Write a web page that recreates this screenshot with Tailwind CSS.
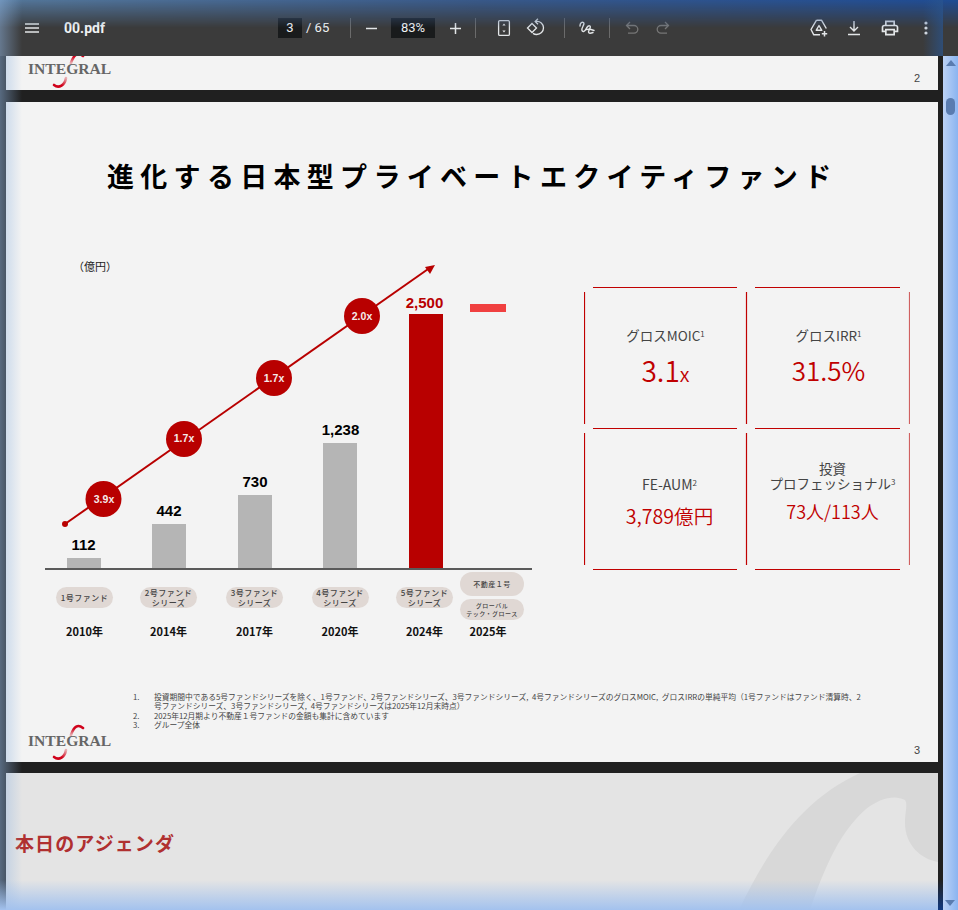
<!DOCTYPE html>
<html lang="ja">

<head>
  <meta charset="UTF-8">
  <title>00.pdf</title>
  <script src="https://cdn.jsdelivr.net/npm/@tailwindcss/browser@4"></script>
</head>

<body class="bg-[#202020]">
  <div class="relative w-[958px] h-[910px] overflow-hidden flex flex-col font-['Noto_Sans_CJK_JP',sans-serif]">

    <!-- Toolbar -->
    <header class="relative h-[56px] shrink-0 bg-[#3b3b3b] flex items-center text-[#f1f3f4] font-['Roboto',sans-serif]">
      <svg class="ml-[25px] w-[14px] h-[10px]" viewBox="0 0 14 10" fill="none" stroke="#e3e6e8" stroke-width="1.3">
        <path d="M0 1h14M0 5h14M0 9h14" />
      </svg>
      <span class="ml-[25px] w-[214px] text-[14px] font-bold">00.pdf</span>
      <span class="w-[24px] h-[20px] bg-[#191b1c] flex items-center justify-center text-[13px]">3</span>
      <span class="ml-[4px] w-[44px] text-[13px]">/ 65</span>
      <span class="w-px h-[20px] bg-[#6b6b6b]"></span>
      <svg class="ml-[15px] w-[11px] h-[11px]" viewBox="0 0 11 11" stroke="#e3e6e8" stroke-width="1.5">
        <path d="M0 5.5h11" />
      </svg>
      <span class="ml-[14px] w-[44px] h-[20px] bg-[#191b1c] flex items-center justify-center text-[13px]">83%</span>
      <svg class="ml-[15px] w-[11px] h-[11px]" viewBox="0 0 11 11" stroke="#e3e6e8" stroke-width="1.5">
        <path d="M0 5.5h11M5.5 0v11" />
      </svg>
      <span class="ml-[14px] w-px h-[20px] bg-[#6b6b6b]"></span>
      <!-- fit to page -->
      <svg class="ml-[18px] w-[20px] h-[20px]" viewBox="0 0 20 20" fill="none" stroke="#e3e6e8" stroke-width="1.3">
        <rect x="4.6" y="2.6" width="10.8" height="14.8" rx="1.2" />
        <path d="M10 5.5l1.6 2h-3.2zM10 14.5l1.6-2h-3.2z" fill="#e3e6e8" stroke="none" />
      </svg>
      <!-- rotate -->
      <svg class="ml-[11px] w-[22px] h-[22px]" viewBox="0 0 22 22" fill="none" stroke="#e3e6e8" stroke-width="1.3">
        <path d="M7 6.5l4.500 4.500-4.500 4.500L2.500 11z" />
        <path d="M11 4.500c4.200-.6 7.500 2.400 7.500 6.300 0 3.800-3 6.700-6.800 6.700-1.500 0-2.700-.4-3.700-1.100" />
        <path d="M13 1.800L10.200 4.500 13 7.200" />
      </svg>
      <span class="ml-[17px] w-px h-[20px] bg-[#6b6b6b]"></span>
      <!-- draw -->
      <svg class="ml-[12px] w-[20px] h-[20px]" viewBox="0 0 20 20" fill="none" stroke="#e3e6e8" stroke-width="1.4" stroke-linecap="round">
        <path d="M3 8c0-3 2-4.500 3.500-3.500 2 1.500-2.500 5-1.500 8 .7 2 3 .8 4-1.500 1-2 2.500-4 4-3 1.500 1.200-1.500 4-1.500 6 0 1.500 2 1.500 4.500.5" />
        <path d="M9.500 11.500c2-.5 5 0 7.500 1" />
      </svg>
      <span class="ml-[12px] w-px h-[20px] bg-[#6b6b6b]"></span>
      <!-- undo / redo -->
      <svg class="ml-[15px] w-[14px] h-[14px]" viewBox="0 0 14 14" fill="none" stroke="#777" stroke-width="1.3">
        <path d="M5 1L1.500 4.500 5 8M1.500 4.500H9a3.800 3.800 0 0 1 0 7.600H3" />
      </svg>
      <svg class="ml-[17px] w-[14px] h-[14px]" viewBox="0 0 14 14" fill="none" stroke="#777" stroke-width="1.3">
        <path d="M9 1l3.500 3.500L9 8M12.500 4.500H5a3.800 3.800 0 0 0 0 7.600h6" />
      </svg>
      <!-- add to drive -->
      <svg class="ml-[139px] w-[20px] h-[20px]" viewBox="0 0 20 20" fill="none" stroke="#e3e6e8" stroke-width="1.4" stroke-linejoin="round">
        <path d="M7.500 2.200h5l4.800 8.300M7.500 2.200L2 11.500l2.800 5.300H11" />
        <path d="M10 7.500l2.800 4.800H7.200z" />
        <path d="M15.500 13v5.500M12.800 15.800h5.400" stroke-width="1.500" />
      </svg>
      <!-- download -->
      <svg class="ml-[18px] w-[14px] h-[16px]" viewBox="0 0 14 16" fill="none" stroke="#e3e6e8" stroke-width="1.4">
        <path d="M7 1v9.500M3 7l4 4 4-4M1 14.500h12" />
      </svg>
      <!-- print -->
      <svg class="ml-[19px] w-[20px] h-[20px]" viewBox="0 0 24 24" fill="#e3e6e8">
        <path d="M19 8h-1V3H6v5H5c-1.660 0-3 1.340-3 3v6h4v4h12v-4h4v-6c0-1.660-1.340-3-3-3zM8 5h8v3H8V5zm8 12v2H8v-4h8v2zm2-2v-2H6v2H4v-4c0-.55.45-1 1-1h14c.55 0 1 .45 1 1v4h-2z" />
      </svg>
      <!-- more -->
      <svg class="ml-[24px] w-[4px] h-[14px]" viewBox="0 0 4 14" fill="#e3e6e8">
        <circle cx="2" cy="2" r="1.600" />
        <circle cx="2" cy="7" r="1.600" />
        <circle cx="2" cy="12" r="1.600" />
      </svg>
    </header>

    <div class="flex flex-1 min-h-0">
      <main class="w-[943px] pl-[6px] pr-[5px] flex flex-col">

        <!-- Page 2, bottom edge -->
        <section class="relative h-[34px] shrink-0 bg-[#f3f3f3] overflow-hidden">
          <div class="absolute left-[22px] top-[-4px] w-[86px] h-[38px]">
            <svg class="absolute inset-0" viewBox="0 0 86 38" fill="none" stroke-width="2.600" stroke-linecap="round">
              <defs>
                <linearGradient id="hookA" x1="0" y1="0" x2="0" y2="1">
                  <stop offset="0.3" stop-color="#d0021b" />
                  <stop offset="1" stop-color="#e8b0b4" />
                </linearGradient>
                <linearGradient id="tailA" x1="1" y1="0" x2="0" y2="1">
                  <stop offset="0" stop-color="#e8b0b4" />
                  <stop offset="0.6" stop-color="#d0021b" />
                </linearGradient>
              </defs>
              <path d="M55 4C50 0 46 2 43 11" stroke="url(#hookA)" />
              <path d="M38 26C37 33 31 37 26 33" stroke="url(#tailA)" />
            </svg>
            <span class="absolute left-0 top-[7px] font-['Liberation_Serif',serif] font-bold text-[15.600px] leading-[20px] text-[#666]">INTEGRAL</span>
          </div>
          <span class="absolute left-[908px] top-[14px] text-[11px] leading-[16px] text-[#444] font-['Liberation_Sans',sans-serif]">2</span>
        </section>

        <!-- Page 3 -->
        <section class="relative h-[660px] shrink-0 mt-[12px] bg-[#f3f3f3] overflow-hidden">
          <h1 class="pt-[54px] pl-[101px] h-[94px] text-[27px] leading-[40px] font-bold tracking-[6.300px] text-black whitespace-nowrap">進化する日本型プライベートエクイティファンド</h1>

          <div class="flex mt-[56px] pb-0">
            <!-- Chart -->
            <div class="relative w-[578px] pl-[35px] h-[393px] flex items-start text-center">
              <span class="absolute left-[67px] top-[6px] text-[11px] leading-[16px] text-[#222]">（億円）</span>

              <div class="absolute left-[39px] top-[316px] w-[487px] h-[2px] bg-[#5a5a5a]"></div>

              <!-- growth arrow -->
              <svg class="absolute left-0 top-0 z-10" width="530" height="317" viewBox="0 0 530 317" fill="none">
                <path d="M59 272L425 15" stroke="#b80000" stroke-width="2" />
                <path d="M429 13L419 15L424 22Z" fill="#b80000" />
                <circle cx="59" cy="272" r="3" fill="#b80000" />
                <circle cx="97.500" cy="247" r="18" fill="#b80000" />
                <circle cx="178" cy="187" r="18" fill="#b80000" />
                <circle cx="268" cy="126" r="18" fill="#b80000" />
                <circle cx="356" cy="64" r="18" fill="#b80000" />
              </svg>
              <div class="absolute left-[80px] top-[238px] w-[36px] z-20 text-[10.500px] leading-[18px] font-bold text-[#f5eaea] font-['Liberation_Sans',sans-serif]">3.9x</div>
              <div class="absolute left-[160px] top-[177px] w-[36px] z-20 text-[10.500px] leading-[18px] font-bold text-[#f5eaea] font-['Liberation_Sans',sans-serif]">1.7x</div>
              <div class="absolute left-[250px] top-[117px] w-[36px] z-20 text-[10.500px] leading-[18px] font-bold text-[#f5eaea] font-['Liberation_Sans',sans-serif]">1.7x</div>
              <div class="absolute left-[338px] top-[55px] w-[36px] z-20 text-[10.500px] leading-[18px] font-bold text-[#f5eaea] font-['Liberation_Sans',sans-serif]">2.0x</div>

              <div class="w-[85px] flex flex-col items-center">
                <div class="h-[317px] flex flex-col justify-end items-center">
                  <span class="mb-[4px] text-[15px] leading-[18px] font-bold text-black font-['Liberation_Sans',sans-serif]">112</span>
                  <div class="w-[34px] h-[11px] bg-[#b5b5b5]"></div>
                </div>
                <div class="mt-[18px] ml-[2px] h-[21px] w-[57px] rounded-full bg-[#e0d8d4] flex items-center justify-center text-[8px] leading-[10px] font-medium tracking-[0.5px] text-[#444]">1号ファンド</div>
                <span class="mt-[15px] ml-[2px] text-[11px] leading-[16px] font-bold text-[#111]">2010年</span>
              </div>

              <div class="w-[86px] flex flex-col items-center">
                <div class="h-[317px] flex flex-col justify-end items-center">
                  <span class="mb-[4px] text-[15px] leading-[18px] font-bold text-black font-['Liberation_Sans',sans-serif]">442</span>
                  <div class="w-[34px] h-[45px] bg-[#b5b5b5]"></div>
                </div>
                <div class="mt-[18px] mr-[1px] h-[21px] w-[57px] rounded-full bg-[#e0d8d4] flex items-center justify-center text-[8px] leading-[10px] font-medium tracking-[0.5px] text-[#444]">2号ファンド<br>シリーズ</div>
                <span class="mt-[15px] mr-[1px] text-[11px] leading-[16px] font-bold text-[#111]">2014年</span>
              </div>

              <div class="w-[86px] flex flex-col items-center">
                <div class="h-[317px] flex flex-col justify-end items-center">
                  <span class="mb-[4px] text-[15px] leading-[18px] font-bold text-black font-['Liberation_Sans',sans-serif]">730</span>
                  <div class="w-[34px] h-[74px] bg-[#b5b5b5]"></div>
                </div>
                <div class="mt-[18px] mr-[1px] h-[21px] w-[57px] rounded-full bg-[#e0d8d4] flex items-center justify-center text-[8px] leading-[10px] font-medium tracking-[0.5px] text-[#444]">3号ファンド<br>シリーズ</div>
                <span class="mt-[15px] mr-[1px] text-[11px] leading-[16px] font-bold text-[#111]">2017年</span>
              </div>

              <div class="w-[85px] flex flex-col items-center">
                <div class="h-[317px] flex flex-col justify-end items-center">
                  <span class="mb-[4px] text-[15px] leading-[18px] font-bold text-black font-['Liberation_Sans',sans-serif]">1,238</span>
                  <div class="w-[34px] h-[126px] bg-[#b5b5b5]"></div>
                </div>
                <div class="mt-[18px] mr-[1px] h-[21px] w-[57px] rounded-full bg-[#e0d8d4] flex items-center justify-center text-[8px] leading-[10px] font-medium tracking-[0.5px] text-[#444]">4号ファンド<br>シリーズ</div>
                <span class="mt-[15px] mr-[1px] text-[11px] leading-[16px] font-bold text-[#111]">2020年</span>
              </div>

              <div class="w-[86px] flex flex-col items-center">
                <div class="h-[317px] flex flex-col justify-end items-center">
                  <span class="mb-[2px] mr-[3px] text-[15px] leading-[18px] font-bold text-[#b80000] font-['Liberation_Sans',sans-serif]">2,500</span>
                  <div class="w-[34px] h-[255px] bg-[#b80000]"></div>
                </div>
                <div class="mt-[18px] mr-[3px] h-[21px] w-[57px] rounded-full bg-[#e0d8d4] flex items-center justify-center text-[8px] leading-[10px] font-medium tracking-[0.5px] text-[#444]">5号ファンド<br>シリーズ</div>
                <span class="mt-[15px] mr-[3px] text-[11px] leading-[16px] font-bold text-[#111]">2024年</span>
              </div>

              <div class="-ml-[1px] w-[40px] flex flex-col items-center">
                <div class="h-[317px] flex flex-col justify-end items-center">
                  <div class="mb-[257px] w-[36px] h-[8px] bg-[#f04040]"></div>
                </div>
                <div class="mt-[3px] ml-[8px] shrink-0 h-[24px] w-[64px] rounded-full bg-[#e0d8d4] flex items-center justify-center text-[7px] leading-[10px] font-medium tracking-[0.5px] text-[#444]">不動産１号</div>
                <div class="mt-[3px] ml-[8px] shrink-0 h-[21px] w-[64px] rounded-full bg-[#e0d8d4] flex items-center justify-center text-[6px] leading-[8px] font-medium tracking-[0.5px] text-[#444]">グローバル<br>テック・グロース</div>
                <span class="mt-[3px] whitespace-nowrap text-[11px] leading-[16px] font-bold text-[#111]">2025年</span>
              </div>
            </div>

            <!-- Metrics -->
            <div class="relative mt-[35px] w-[326px] h-[283px] grid grid-cols-2 grid-rows-2 text-center text-[#444]">
              <svg class="absolute inset-0" width="326" height="283" viewBox="0 0 326 283" fill="none" stroke="#c00000" stroke-width="1.200">
                <path d="M9 .5H153M171 .5H316M9 141.500H153M171 141.500H316M9 282.500H153M171 282.500H316" />
                <path d="M.5 5V137M.5 146V278M162.500 5V137M162.500 146V278" />
                <path d="M325.500 5V137M325.500 146V278" stroke="#d06060" />
              </svg>
              <div class="flex flex-col items-center pt-[38px]">
                <span class="text-[13.500px] leading-[20px]">グロスMOIC<sup class="text-[8px]">1</sup></span>
                <span class="mt-[5px] text-[28px] leading-[40px] font-[350] text-[#c00000]">3.1<span class="text-[20px]">x</span></span>
              </div>
              <div class="flex flex-col items-center pt-[38px]">
                <span class="text-[13.500px] leading-[20px]">グロスIRR<sup class="text-[8px]">1</sup></span>
                <span class="mt-[5px] text-[26px] leading-[40px] font-[350] text-[#c00000]">31.5%</span>
              </div>
              <div class="flex flex-col items-center pt-[45px] pl-[8px]">
                <span class="text-[14px] leading-[20px]">FE-AUM<sup class="text-[8px]">2</sup></span>
                <span class="mt-[7px] text-[19.600px] leading-[30px] font-[350] text-[#c00000]">3,789億円</span>
              </div>
              <div class="flex flex-col items-center pt-[32px] pl-[8px]">
                <span class="text-[13.500px] leading-[15px]">投資</span>
                <span class="text-[13.500px] leading-[15px]">プロフェッショナル<sup class="text-[8px]">3</sup></span>
                <span class="mt-[6px] text-[18px] leading-[28px] font-[350] text-[#c00000]">73人/113人</span>
              </div>
            </div>
          </div>

          <!-- Footnotes -->
          <ol class="ml-[127px] mt-[47px] w-[740px] grid grid-cols-[21px_708px] text-[7.750px] leading-[9.400px] text-[#444] [word-spacing:2px]">
            <li class="contents"><span>1.</span><span>投資期間中である5号ファンドシリーズを除く、1号ファンド、2号ファンドシリーズ、3号ファンドシリーズ, 4号ファンドシリーズのグロスMOIC, グロスIRRの単純平均（1号ファンドはファンド清算時、2<br>号ファンドシリーズ、3号ファンドシリーズ, 4号ファンドシリーズは2025年12月末時点）</span></li>
            <li class="contents"><span>2.</span><span>2025年12月期より不動産１号ファンドの金額も集計に含めています</span></li>
            <li class="contents"><span>3.</span><span>グループ全体</span></li>
          </ol>

          <div class="absolute left-[22px] top-[622px] w-[86px] h-[38px]">
            <svg class="absolute inset-0" viewBox="0 0 86 38" fill="none" stroke-width="2.600" stroke-linecap="round">
              <defs>
                <linearGradient id="hookB" x1="0" y1="0" x2="0" y2="1">
                  <stop offset="0.3" stop-color="#d0021b" />
                  <stop offset="1" stop-color="#e8b0b4" />
                </linearGradient>
                <linearGradient id="tailB" x1="1" y1="0" x2="0" y2="1">
                  <stop offset="0" stop-color="#e8b0b4" />
                  <stop offset="0.6" stop-color="#d0021b" />
                </linearGradient>
              </defs>
              <path d="M55 4C50 0 46 2 43 11" stroke="url(#hookB)" />
              <path d="M38 26C37 33 31 37 26 33" stroke="url(#tailB)" />
            </svg>
            <span class="absolute left-0 top-[7px] font-['Liberation_Serif',serif] font-bold text-[15.600px] leading-[20px] text-[#666]">INTEGRAL</span>
          </div>
          <span class="absolute left-[908px] top-[640px] text-[11px] leading-[16px] text-[#444] font-['Liberation_Sans',sans-serif]">3</span>
        </section>

        <!-- Page 4 -->
        <section class="relative flex-1 mt-[11px] bg-[#e4e4e4] overflow-hidden">
          <svg class="absolute inset-0" width="932" height="137" viewBox="0 0 932 137" fill="#d8d8d8">
            <path d="M733 137C765 70 800 25 854 0H932V89C915 86 899 72 899 50C899 38 902 32 899 27C890 22 875 24 860 36C835 58 820 90 804 137Z" />
          </svg>
          <h2 class="relative pt-[56px] pl-[9px] text-[19px] leading-[28px] font-bold tracking-[1.100px] text-[#b03030]">本日のアジェンダ</h2>
        </section>
      </main>

      <!-- Scrollbar -->
      <aside class="relative w-[15px] bg-linear-to-r from-[#bcd2f6] to-[#8ab4f0]">
        <div class="mx-auto mt-[4px] w-0 h-0 border-x-[5px] border-x-transparent border-b-[6px] border-b-[#5a7cb0]"></div>
        <div class="absolute left-[3px] top-[42px] w-[9px] h-[17px] rounded-full bg-[#5a7cb0]"></div>
        <div class="absolute left-[2px] bottom-[4px] w-0 h-0 border-x-[5px] border-x-transparent border-t-[6px] border-t-[#5a7cb0]"></div>
      </aside>
    </div>

    <!-- Window glow over the edges -->
    <div class="absolute left-0 top-0 right-0 h-[28px] pointer-events-none bg-linear-to-r from-[#547699] via-[#38598a] to-[#1f4c94] [mask-image:linear-gradient(to_bottom,black,transparent)]"></div>
    <div class="absolute left-0 top-0 bottom-0 w-[22px] pointer-events-none bg-linear-to-r from-[#8fb4e0]/50 to-transparent"></div>
    <div class="absolute right-[15px] top-0 h-[56px] w-[20px] pointer-events-none bg-linear-to-r from-transparent to-[#2a558f]/70"></div>
    <div class="absolute left-0 right-[20px] bottom-0 h-[30px] pointer-events-none bg-linear-to-b from-transparent to-[#a3c2ee]"></div>
    <div class="absolute right-[15px] bottom-0 h-[30px] w-[5px] pointer-events-none bg-linear-to-b from-transparent to-[#123a80]"></div>
  </div>
</body>

</html>
